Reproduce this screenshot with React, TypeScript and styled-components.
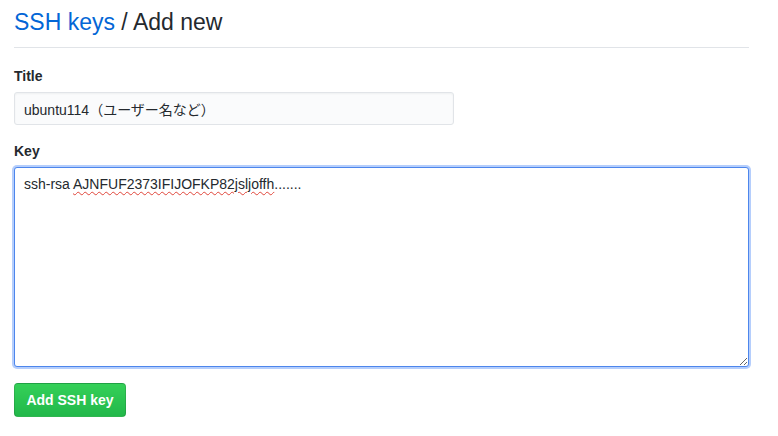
import React from 'react'
import styled, { createGlobalStyle } from 'styled-components'

const GlobalStyle = createGlobalStyle`
    html, body {
        margin: 0;
        padding: 0;
        background: #ffffff;
    }
    body {
        font-family: "Liberation Sans", Arial, "Noto Sans CJK JP", sans-serif;
        color: #24292e;
        font-size: 14px;
    }
`

const PageStyled = styled.div`
    padding: 4px 29px 0 14px;
`

const HeaderStyled = styled.h1`
    margin: 0 0 18px;
    padding-bottom: 7px;
    border-bottom: 1px solid #e1e4e8;
    font-size: 23px;
    font-weight: 400;
    line-height: 36px;
    color: #24292e;
`

const CrumbLinkStyled = styled.a`
    color: #0366d6;
    text-decoration: none;
`

const FieldStyled = styled.div`
    margin-bottom: 16px;
`

const LabelStyled = styled.label`
    display: block;
    font-size: 14px;
    font-weight: 700;
    line-height: 20px;
    margin-bottom: 6px;
`

const InputStyled = styled.div`
    box-sizing: border-box;
    width: 440px;
    height: 33px;
    padding: 0 9px;
    display: flex;
    align-items: center;
    background: #fafbfc;
    border: 1px solid #e1e4e8;
    border-radius: 3px;
    box-shadow: inset 0 1px 2px rgba(27, 31, 35, 0.05);
    font-size: 14px;
    color: #24292e;
`

const TextareaStyled = styled.div`
    box-sizing: border-box;
    width: 100%;
    height: 200px;
    padding: 6px 9px;
    background: #ffffff;
    border: 1px solid #4d86ec;
    border-radius: 3px;
    box-shadow: 0 0 0 2px rgba(120, 165, 250, 0.55);
    font-size: 14px;
    line-height: 20px;
    color: #24292e;
    overflow: auto;
    resize: vertical;
`

const MisspelledStyled = styled.span`
    text-decoration: underline wavy #e0453a;
    text-decoration-thickness: 1px;
    text-underline-offset: 2px;
`

const ButtonStyled = styled.button`
    box-sizing: border-box;
    width: 112px;
    height: 34px;
    padding: 0;
    border: 1px solid rgba(27, 31, 35, 0.15);
    border-radius: 4px;
    background: linear-gradient(180deg, #34d058 0%, #22b84a 100%);
    color: #ffffff;
    font-family: inherit;
    font-size: 14px;
    font-weight: 700;
    cursor: pointer;
`

export default function App() {
    return (
        <>
            <GlobalStyle />
            <PageStyled>
                <HeaderStyled>
                    <CrumbLinkStyled href="#">SSH keys</CrumbLinkStyled> / Add new
                </HeaderStyled>
                <FieldStyled>
                    <LabelStyled>Title</LabelStyled>
                    <InputStyled>ubuntu114（ユーザー名など）</InputStyled>
                </FieldStyled>
                <FieldStyled>
                    <LabelStyled>Key</LabelStyled>
                    <TextareaStyled>
                        ssh-rsa <MisspelledStyled>AJNFUF2373IFIJOFKP82jsljoffh</MisspelledStyled>.......
                    </TextareaStyled>
                </FieldStyled>
                <ButtonStyled>Add SSH key</ButtonStyled>
            </PageStyled>
        </>
    )
}
